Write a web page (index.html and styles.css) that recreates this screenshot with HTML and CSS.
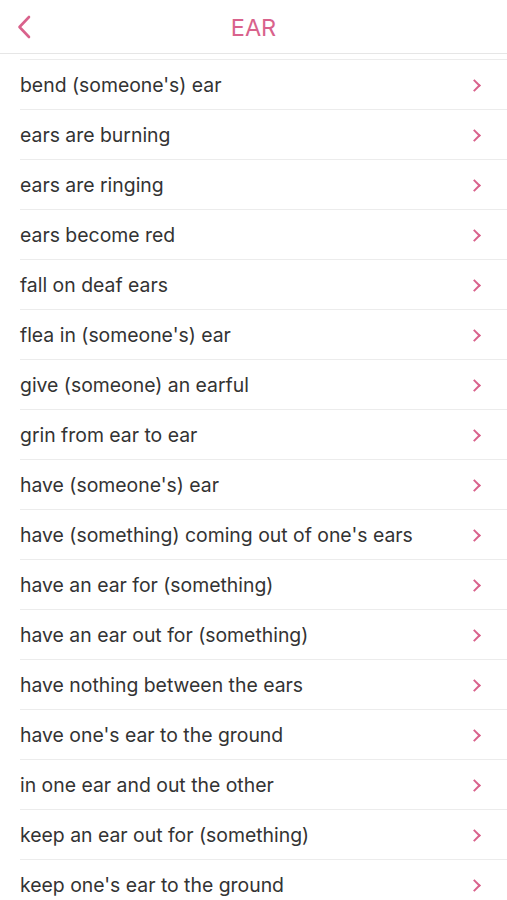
FILE: index.html
```html
<!DOCTYPE html>
<html lang="en">

<head>
  <meta charset="UTF-8">
  <meta name="viewport" content="width=device-width, initial-scale=1.0">
  <title>EAR</title>
  <link rel="stylesheet" href="styles.css">
</head>

<body>
  <div class="page">
    <!-- top bar -->
    <div class="nav">
      <a class="back" href="#">
        <svg width="14" height="24" viewBox="0 0 14 24">
          <path d="M12 2 L2.5 12 L12 22" fill="none" stroke="#d9628c" stroke-width="2.6" stroke-linecap="round" stroke-linejoin="round" />
        </svg>
      </a>
      <div class="title">EAR</div>
    </div>

    <!-- idiom list -->
    <ul class="list">
      <li class="item"><span>bend (someone's) ear</span><i class="arrow"></i></li>
      <li class="item"><span>ears are burning</span><i class="arrow"></i></li>
      <li class="item"><span>ears are ringing</span><i class="arrow"></i></li>
      <li class="item"><span>ears become red</span><i class="arrow"></i></li>
      <li class="item"><span>fall on deaf ears</span><i class="arrow"></i></li>
      <li class="item"><span>flea in (someone's) ear</span><i class="arrow"></i></li>
      <li class="item"><span>give (someone) an earful</span><i class="arrow"></i></li>
      <li class="item"><span>grin from ear to ear</span><i class="arrow"></i></li>
      <li class="item"><span>have (someone's) ear</span><i class="arrow"></i></li>
      <li class="item"><span>have (something) coming out of one's ears</span><i class="arrow"></i></li>
      <li class="item"><span>have an ear for (something)</span><i class="arrow"></i></li>
      <li class="item"><span>have an ear out for (something)</span><i class="arrow"></i></li>
      <li class="item"><span>have nothing between the ears</span><i class="arrow"></i></li>
      <li class="item"><span>have one's ear to the ground</span><i class="arrow"></i></li>
      <li class="item"><span>in one ear and out the other</span><i class="arrow"></i></li>
      <li class="item"><span>keep an ear out for (something)</span><i class="arrow"></i></li>
      <li class="item"><span>keep one's ear to the ground</span><i class="arrow"></i></li>
    </ul>
  </div>
</body>

</html>
```

FILE: styles.css
```css
* {
  margin: 0;
  padding: 0;
  box-sizing: border-box;
}

body {
  background: #fff;
  font-family: Inter, "Liberation Sans", Arial, sans-serif;
  color: #333;
}

.page {
  width: 507px;
  height: 900px;
  overflow: hidden;
}

.nav {
  height: 54px;
  border-bottom: 1px solid #e6e6e6;
  display: flex;
  align-items: center;
  justify-content: center;
  position: relative;
}

.back {
  position: absolute;
  left: 17px;
  top: 15px;
  display: block;
  width: 14px;
  height: 24px;
}

.back svg {
  display: block;
}

.title {
  color: #d9628c;
  font-size: 23.5px;
  padding-top: 1px;
}

.list {
  list-style: none;
  margin-top: 5px;
  padding-left: 20px;
}

.item {
  height: 50px;
  border-top: 1px solid #ececec;
  display: flex;
  align-items: center;
  justify-content: space-between;
  padding: 1px 28px 0 0;
  font-size: 19.4px;
}

.arrow {
  width: 9px;
  height: 9px;
  border-top: 2px solid #d9628c;
  border-right: 2px solid #d9628c;
  transform: rotate(45deg);
}
```
